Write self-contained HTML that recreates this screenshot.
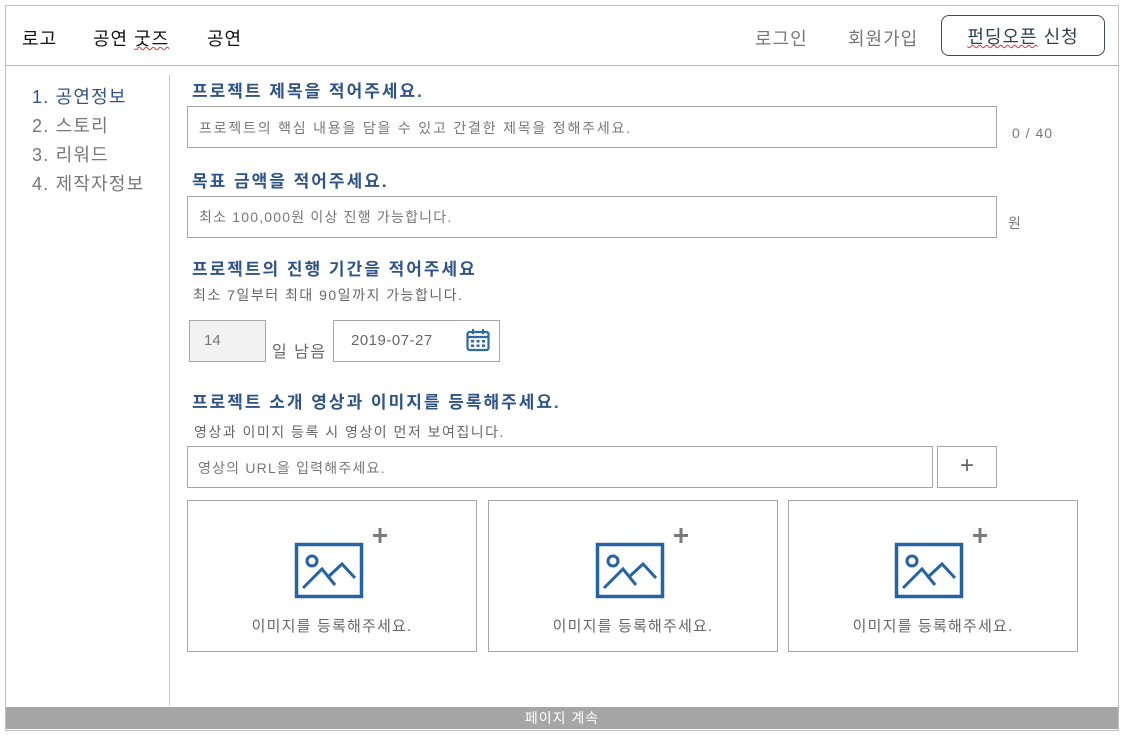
<!DOCTYPE html>
<html><head><meta charset="utf-8"><style>
*{margin:0;padding:0;box-sizing:border-box}
body{width:1125px;height:737px;background:#fff;position:relative;overflow:hidden;font-family:"Liberation Sans","Noto Sans CJK KR",sans-serif;}
.a{position:absolute;white-space:nowrap}
.box{position:absolute;border:1px solid #a6a6a6;background:#fff}
.h{position:absolute;font-size:17px;font-weight:bold;color:#2f5486;white-space:nowrap;letter-spacing:2px}
.ph{font-size:14px;color:#777;letter-spacing:1.8px}
.sub{font-size:14px;color:#666;letter-spacing:1.5px}
</style></head><body>
<div class="a" style="left:5px;top:5px;width:1114px;height:726px;border:1px solid #c0c0c0"></div>
<div class="a" style="left:6px;top:65px;width:1112px;height:1px;background:#b4b4b4"></div>
<div class="a" style="left:22px;top:25px;font-size:18px;color:#111;letter-spacing:1px">로고</div>
<div class="a" style="left:93px;top:25px;font-size:18px;color:#111;letter-spacing:1px">공연 <span style="text-decoration:underline wavy #d33;text-decoration-thickness:1px">굿즈</span></div>
<div class="a" style="left:207px;top:25px;font-size:18px;color:#111;letter-spacing:1px">공연</div>
<div class="a" style="left:755px;top:25px;font-size:18px;color:#777;letter-spacing:1px">로그인</div>
<div class="a" style="left:848px;top:25px;font-size:18px;color:#777;letter-spacing:1px">회원가입</div>
<div class="a" style="left:941px;top:15px;width:164px;height:41px;border:1px solid #3b4a5e;border-radius:8px;font-size:18px;color:#2d3d52;text-align:center;line-height:38px;padding-top:2px;letter-spacing:1px"><span style="text-decoration:underline wavy #d33;text-decoration-thickness:1px">펀딩오픈</span> 신청</div>

<div class="a" style="left:169px;top:75px;width:1px;height:631px;background:#c8c8c8"></div>
<div class="a" style="left:32px;top:83px;font-size:18px;line-height:29px;color:#777;letter-spacing:1.2px">
<div style="color:#2f5486">1. 공연정보</div><div>2. 스토리</div><div>3. 리워드</div><div>4. 제작자정보</div></div>

<div class="h" style="left:192px;top:77px">프로젝트 제목을 적어주세요.</div>
<div class="box" style="left:187px;top:106px;width:810px;height:42px"><span class="a ph" style="left:11px;top:11px">프로젝트의 핵심 내용을 담을 수 있고 간결한 제목을 정해주세요.</span></div>
<div class="a" style="left:1012px;top:125px;font-size:14px;color:#777;letter-spacing:1px">0 / 40</div>

<div class="h" style="left:192px;top:167px">목표 금액을 적어주세요.</div>
<div class="box" style="left:187px;top:196px;width:810px;height:42px"><span class="a ph" style="left:11px;top:10px;letter-spacing:1.2px">최소 100,000원 이상 진행 가능합니다.</span></div>
<div class="a" style="left:1008px;top:213px;font-size:14px;color:#777">원</div>

<div class="h" style="left:192px;top:255px">프로젝트의 진행 기간을 적어주세요</div>
<div class="a sub" style="left:193px;top:285px">최소 7일부터 최대 90일까지 가능합니다.</div>
<div class="box" style="left:189px;top:320px;width:77px;height:42px;background:#f2f2f2"><span class="a" style="left:14px;top:11px;font-size:15px;color:#777">14</span></div>
<div class="a" style="left:272px;top:338px;font-size:16px;color:#666;letter-spacing:1.5px">일 남음</div>
<div class="box" style="left:333px;top:320px;width:167px;height:42px"><span class="a" style="left:17px;top:11px;font-size:15px;color:#666;letter-spacing:.5px">2019-07-27</span>
<svg class="a" style="left:131px;top:6px" width="26" height="26" viewBox="0 0 26 26"><rect x="2.5" y="5" width="21" height="18" rx="2" fill="none" stroke="#2f6aa8" stroke-width="2.2"/><line x1="2.5" y1="10" x2="23.5" y2="10" stroke="#2f6aa8" stroke-width="2.2"/><line x1="8" y1="2" x2="8" y2="7" stroke="#2f6aa8" stroke-width="2"/><line x1="18" y1="2" x2="18" y2="7" stroke="#2f6aa8" stroke-width="2"/><g fill="#2f6aa8"><rect x="6" y="13" width="3" height="2.5"/><rect x="11.5" y="13" width="3" height="2.5"/><rect x="17" y="13" width="3" height="2.5"/><rect x="6" y="17.5" width="3" height="2.5"/><rect x="11.5" y="17.5" width="3" height="2.5"/><rect x="17" y="17.5" width="3" height="2.5"/></g></svg></div>

<div class="h" style="left:192px;top:388px">프로젝트 소개 영상과 이미지를 등록해주세요.</div>
<div class="a sub" style="left:194px;top:422px">영상과 이미지 등록 시 영상이 먼저 보여집니다.</div>
<div class="box" style="left:187px;top:446px;width:746px;height:42px"><span class="a ph" style="left:10px;top:11px;letter-spacing:1.2px">영상의 URL을 입력해주세요.</span></div>
<div class="box" style="left:937px;top:446px;width:60px;height:42px;font-size:24px;color:#666;text-align:center;line-height:38px">+</div>

<div class="box" style="left:187px;top:500px;width:290px;height:152px"></div>
<div class="box" style="left:488px;top:500px;width:290px;height:152px"></div>
<div class="box" style="left:788px;top:500px;width:290px;height:152px"></div>
<svg class="a" style="left:0;top:0" width="1125" height="737">
<defs><g id="ic"><rect x="296.5" y="544.5" width="65" height="52" fill="none" stroke="#2563a4" stroke-width="3.5"/><circle cx="312" cy="561" r="5" fill="none" stroke="#2563a4" stroke-width="3"/><path d="M303 588 L322 569 L335 585 M328 577 L342 564 L355 578" fill="none" stroke="#2563a4" stroke-width="3"/><path d="M380 528 V543 M373 535.5 H387" stroke="#7a7a7a" stroke-width="3"/></g></defs>
<use href="#ic"/><use href="#ic" transform="translate(301,0)"/><use href="#ic" transform="translate(600,0)"/>
</svg>
<div class="a" style="left:187px;top:615px;width:290px;text-align:center;font-size:15px;color:#666;letter-spacing:1.2px">이미지를 등록해주세요.</div>
<div class="a" style="left:488px;top:615px;width:290px;text-align:center;font-size:15px;color:#666;letter-spacing:1.2px">이미지를 등록해주세요.</div>
<div class="a" style="left:788px;top:615px;width:290px;text-align:center;font-size:15px;color:#666;letter-spacing:1.2px">이미지를 등록해주세요.</div>

<div class="a" style="left:6px;top:707px;width:1112px;height:22px;background:#a6a6a6;color:#fff;font-size:14px;text-align:center;line-height:22px;letter-spacing:1px">페이지 계속</div>
</body></html>
